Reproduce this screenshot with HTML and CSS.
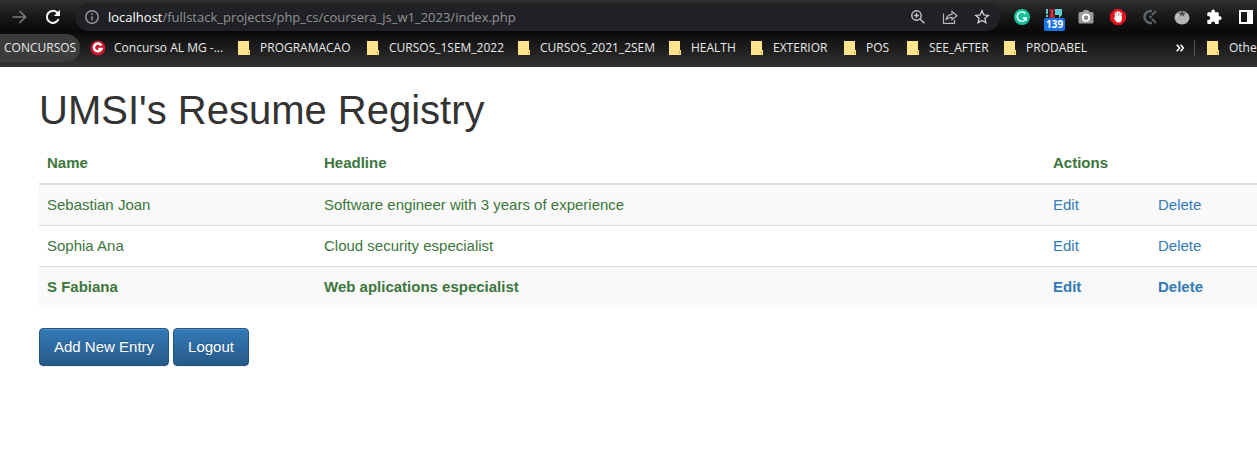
FILE: index.html
```
<!DOCTYPE html>
<html lang="en">
<head>
<meta charset="utf-8">
<title>UMSI's Resume Registry</title>
<link rel="stylesheet" href="styles.css">
</head>
<body>
<svg class="defs" width="0" height="0" aria-hidden="true">
  <symbol id="folder" viewBox="0 0 12 14"><path fill="#fee48c" d="M0 0h11v9h1v5H0z"/><path fill="#d9b23c" d="M10 10h1v3h-1z"/></symbol>
</svg>
<header class="browser">
  <div class="toolbar">
    <button class="icon-btn nav" aria-label="Forward"><svg width="16" height="16" viewBox="0 0 16 16" fill="none" stroke="#77787a" stroke-width="1.7"><path d="M1.500 8H14M8.500 2L14.500 8L8.500 14"/></svg></button>
    <button class="icon-btn nav" aria-label="Reload"><svg width="16" height="16" viewBox="0 0 16 16" fill="none" stroke="#fff" stroke-width="2"><path d="M13.500 10A6 6 0 1 1 12 3.500L13.500 5"/><path fill="#fff" stroke="none" d="M15 .8V7H8.800z"/></svg></button>
    <div class="address">
      <svg width="14" height="14" viewBox="0 0 14 14" fill="none" stroke="#9a9ca4" stroke-width="1.400"><circle cx="7" cy="7" r="6.200"/><path d="M7 6.200V10.500M7 3.300V4.900"/></svg>
      <a class="url" href="#"><span class="host">localhost</span>/fullstack_projects/php_cs/coursera_js_w1_2023/index.php</a>
      <div class="tools">
        <button class="icon-btn" aria-label="Zoom"><svg width="14" height="14" viewBox="0 0 14 14" fill="none" stroke="#c4c7ca" stroke-width="1.400"><circle cx="5.500" cy="5.500" r="4.700"/><path d="M9 9L13.300 13.300M3.200 5.500H7.800M5.500 3.200V7.800"/></svg></button>
        <button class="icon-btn" aria-label="Share"><svg width="16" height="16" viewBox="0 0 16 16" fill="none" stroke="#b4b6b9" stroke-width="1.200"><path d="M1.500 4.500V14.300H12.500V11M4 11C4.500 7.500 6.500 5.600 10 5.400V2.500L15 6.700L10 10.800V8.300C7.500 8.300 5.500 9 4 11Z"/></svg></button>
        <button class="icon-btn" aria-label="Bookmark"><svg width="16" height="16" viewBox="0 0 16 16" fill="none" stroke="#d0d2d5" stroke-width="1.300"><path d="M8 1.800L9.800 6L14.300 6.400L10.900 9.300L11.900 13.700L8 11.400L4.100 13.700L5.100 9.300L1.700 6.400L6.200 6Z"/></svg></button>
      </div>
    </div>
    <div class="extensions">
      <button class="icon-btn" aria-label="Grammar"><svg width="16" height="16" viewBox="0 0 16 16" fill="none"><circle cx="8" cy="8" r="8" fill="#15c39a"/><path d="M11.500 4.800A4.600 4.600 0 1 0 12.200 9H8.800M12.200 8.500V12" stroke="#fff" stroke-width="1.300"/></svg></button>
      <button class="icon-btn counter" aria-label="Requests"><svg width="18" height="18" viewBox="0 0 18 18"><path fill="#5fcfd1" d="M1 1h2v5H1zM1 7h2v2H1zM10 1h7v6l-3 3V7h-4z"/><path fill="#8c2233" d="M4 1h6v2L8.500 5L10 7v3H4V7l1.500-2L4 3z"/><path fill="#d13145" d="M6 2h2v7H6z"/></svg><span class="badge">139</span></button>
      <button class="icon-btn" aria-label="Camera"><svg width="16" height="16" viewBox="0 0 16 16"><path fill="#9b9b9b" d="M2 3h2.500L6 1h4l1.500 2H14a1.500 1.500 0 0 1 1.500 1.500v8.500a1.500 1.500 0 0 1-1.500 1.500H2A1.500 1.500 0 0 1 .5 13V4.500A1.500 1.500 0 0 1 2 3z"/><circle cx="8" cy="8.700" r="3.200" fill="#888" stroke="#fff" stroke-width="1.800"/></svg></button>
      <button class="icon-btn" aria-label="Blocker"><svg width="16" height="16" viewBox="0 0 16 16"><path fill="#e4131b" d="M5 0h6l5 5v6l-5 5H5l-5-5V5z"/><path fill="none" stroke="#fff" stroke-width="1.500" stroke-linecap="round" d="M5.500 4V8M7.300 2.700V8M9.100 2.900V8M10.900 4V9"/><path fill="#fff" d="M4.800 7h6.900v3.500c0 2-1.200 3-3 3-2.200 0-3-1.300-5-4.500.4-.8 1-.5 1.600.2z"/></svg></button>
      <button class="icon-btn" aria-label="Time tracker"><svg width="16" height="16" viewBox="0 0 16 16" fill="none" stroke="#59666f"><path stroke-width="2.400" d="M10 2.200A6 6 0 1 0 10 13.800"/><path stroke-width="1.800" d="M10 6L14 2M10 10L14 14"/><circle cx="8.500" cy="8" r="1.400" fill="#59666f" stroke="none"/></svg></button>
      <button class="icon-btn" aria-label="Tomato"><svg width="16" height="16" viewBox="0 0 16 16"><ellipse cx="8" cy="8.800" rx="7.500" ry="6.700" fill="#b4b4b4"/><path fill="#4b4b4b" d="M3 4l4-.4L7.500 1h1L9 3.600l4 .4-3 1 .5 3L8 5.700 6.300 8V5z"/><path fill="none" stroke="#ddd" d="M2.500 8.500C2.800 7 3.500 6.200 4.500 5.800"/></svg></button>
      <button class="icon-btn" aria-label="Extensions"><svg width="16" height="16" viewBox="0 0 16 16"><path fill="#fff" d="M13.800 7.200h-1V4.500c0-.7-.5-1.300-1.200-1.300H9V2.300a1.800 1.800 0 0 0-3.600 0v.9H2.500c-.7 0-1.200.6-1.200 1.300V7h.9a2 2 0 0 1 0 4h-.9v2.700c0 .7.5 1.300 1.200 1.300h2.700v-.9a2 2 0 0 1 3.900 0v.9h2.500c.7 0 1.200-.6 1.200-1.300V11h1a1.900 1.900 0 0 0 0-3.800z"/></svg></button>
      <button class="icon-btn" aria-label="Side panel"><svg width="16" height="16" viewBox="0 0 16 16"><path fill="#fff" fill-rule="evenodd" d="M1 1h14v14H1zM3 3v10h6V3z"/></svg></button>
    </div>
  </div>
  <nav class="bookmarks" aria-label="Bookmarks">
    <a class="chip" href="#">CONCURSOS</a>
    <a class="mark site" href="#"><svg width="16" height="16" viewBox="0 0 16 16" fill="none"><circle cx="8" cy="8" r="7.500" fill="#c8142c"/><path d="M11.300 5.600A3.900 3.900 0 1 0 11.400 9H8.300" stroke="#fff" stroke-width="2.500"/></svg>Concurso AL MG -...</a>
    <a class="mark" href="#"><svg width="12" height="14"><use href="#folder"/></svg>PROGRAMACAO</a>
    <a class="mark" href="#"><svg width="12" height="14"><use href="#folder"/></svg>CURSOS_1SEM_2022</a>
    <a class="mark" href="#"><svg width="12" height="14"><use href="#folder"/></svg>CURSOS_2021_2SEM</a>
    <a class="mark" href="#"><svg width="12" height="14"><use href="#folder"/></svg>HEALTH</a>
    <a class="mark" href="#"><svg width="12" height="14"><use href="#folder"/></svg>EXTERIOR</a>
    <a class="mark" href="#"><svg width="12" height="14"><use href="#folder"/></svg>POS</a>
    <a class="mark" href="#"><svg width="12" height="14"><use href="#folder"/></svg>SEE_AFTER</a>
    <a class="mark" href="#"><svg width="12" height="14"><use href="#folder"/></svg>PRODABEL</a>
    <button class="icon-btn more" aria-label="More bookmarks"><svg width="8" height="8" viewBox="0 0 8 8" fill="none" stroke="#fff" stroke-width="1.600"><path d="M.8.800L3.600 4L.8 7.200M4.600.8L7.400 4L4.600 7.200"/></svg></button>
    <a class="mark other" href="#"><svg width="12" height="14"><use href="#folder"/></svg>Other</a>
  </nav>
</header>
<main class="page">
  <h1>UMSI's Resume Registry</h1>
  <table class="registry">
    <colgroup><col class="col-name"><col><col class="col-edit"><col class="col-delete"></colgroup>
    <thead><tr><th>Name</th><th>Headline</th><th colspan="2">Actions</th></tr></thead>
    <tbody>
      <tr><td>Sebastian Joan</td><td>Software engineer with 3 years of experience</td><td><a href="#">Edit</a></td><td><a href="#">Delete</a></td></tr>
      <tr><td>Sophia Ana</td><td>Cloud security especialist</td><td><a href="#">Edit</a></td><td><a href="#">Delete</a></td></tr>
      <tr class="current"><td>S Fabiana</td><td>Web aplications especialist</td><td><a href="#">Edit</a></td><td><a href="#">Delete</a></td></tr>
    </tbody>
  </table>
  <div class="actions"><button class="btn">Add New Entry</button><button class="btn">Logout</button></div>
</main>
</body>
</html>
```
FILE: styles.css
```
* { box-sizing: border-box; }
body {
  margin: 0;
  background: #fff;
  color: #333;
  font: 15px/22px "Liberation Sans", Arial, sans-serif;
}
a { color: #337ab7; text-decoration: none; }
svg { display: block; flex: none; }
.defs { position: absolute; }

.browser {
  color: #e8e8e8;
  font-family: "Open Sans", "Noto Sans", sans-serif;
  overflow: hidden;
}
.toolbar {
  display: flex;
  align-items: center;
  height: 33px;
  background: linear-gradient(#303030, #161616 55%, #080808);
}
.icon-btn {
  display: flex;
  align-items: center;
  justify-content: center;
  flex: none;
  width: 32px;
  height: 28px;
  padding: 0;
  border: 0;
  background: none;
}
.nav { width: 34px; }
.nav:first-child { margin-left: 2px; }
.address {
  display: flex;
  flex: 1;
  align-items: center;
  gap: 9px;
  height: 28px;
  margin-left: 5px;
  padding: 0 2px 0 10px;
  border-radius: 14px;
  background: #202124;
}
.url {
  flex: 1;
  color: #919396;
  font-size: 13px;
  line-height: 20px;
  white-space: nowrap;
}
.host { color: #fff; }
.tools, .extensions { display: flex; }
.extensions { margin: 0 -5px 0 6px; }
.counter { position: relative; }
.badge {
  position: absolute;
  left: 6px;
  top: 15px;
  padding: 0 2px;
  border-radius: 2px;
  background: #1a73e8;
  color: #fff;
  font: bold 10px/13px "Open Sans", sans-serif;
}
.bookmarks {
  display: grid;
  grid-template-columns: 90px 148px 129px 151px 151px 82px 93px 63px 97px 1fr 28px 53px;
  align-items: center;
  height: 34px;
  padding-bottom: 4px;
  background: linear-gradient(#0c0c0c, #323232);
  font-size: 12px;
  line-height: 16px;
}
.bookmarks a { color: #e8e8e8; white-space: nowrap; }
.chip {
  justify-self: start;
  padding: 6px 4px;
  border-radius: 0 14px 14px 0;
  background: #3c3c3c;
}
.mark { display: flex; align-items: center; gap: 10px; }
.site { gap: 8px; }
.more { justify-content: flex-start; width: 28px; }
.other {
  margin-left: -10px;
  padding-left: 12px;
  border-left: 1px solid #555;
}

.page { padding: 21px 0 20px 39px; }
h1 { margin: 0 0 11px; font-size: 40px; font-weight: 400; line-height: 44px; }
.registry {
  width: 100%;
  border-collapse: collapse;
  table-layout: fixed;
  color: #3c763d;
}
.col-name { width: 277px; }
.col-edit { width: 105px; }
.col-delete { width: 107px; }
th, td { padding: 9px 8px; text-align: left; }
th { border-bottom: 2px solid #ddd; }
td { border-top: 1px solid #ddd; }
tbody tr:nth-child(odd) { background: #f9f9f9; }
.current { font-weight: 700; }
.actions { display: flex; gap: 4px; margin-top: 21px; }
.btn {
  padding: 7px 14px;
  border: 1px solid #245580;
  border-radius: 4px;
  background: linear-gradient(#337ab7, #265a88);
  box-shadow: inset 0 1px 0 rgba(255, 255, 255, .15), 0 1px 1px rgba(0, 0, 0, .075);
  color: #fff;
  font: inherit;
  text-shadow: 0 -1px 0 rgba(0, 0, 0, .2);
}
```
